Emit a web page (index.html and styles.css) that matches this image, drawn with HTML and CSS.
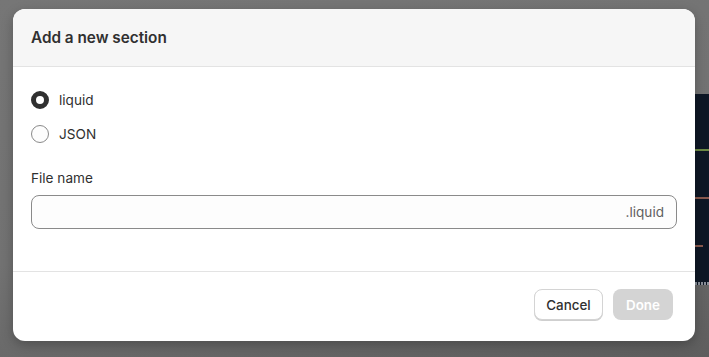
FILE: index.html
```html
<!DOCTYPE html>
<html lang="en">
<head>
  <meta charset="UTF-8" />
  <title>Add a new section</title>
  <link rel="stylesheet" href="styles.css">
</head>
<body>
  <!-- editor panel peeking out behind the overlay -->
  <div class="backdrop-panel">
    <span class="line line-green"></span>
    <span class="line line-red"></span>
    <span class="line line-red short"></span>
    <span class="dots"></span>
  </div>

  <div class="modal">
    <div class="modal-header">
      <h2>Add a new section</h2>
    </div>

    <div class="modal-body">
      <label class="radio-row">
        <span class="radio checked"></span>
        <span>liquid</span>
      </label>
      <label class="radio-row">
        <span class="radio"></span>
        <span>JSON</span>
      </label>

      <div class="field">
        <label class="field-label">File name</label>
        <div class="input-box">
          <input type="text" />
          <span class="suffix">.liquid</span>
        </div>
      </div>
    </div>

    <div class="modal-footer">
      <button class="btn btn-cancel">Cancel</button>
      <button class="btn btn-done" disabled>Done</button>
    </div>
  </div>
</body>
</html>
```

FILE: styles.css
```css
* {
  box-sizing: border-box;
  margin: 0;
  padding: 0;
  font-family: 'Inter', 'Liberation Sans', sans-serif;
}

html, body {
  height: 100%;
}

body {
  background: linear-gradient(170deg, #767676 0%, #727272 55%, #5e5e5e 100%);
  padding: 9px 14px 0 13px;
  overflow: hidden;
  position: relative;
}

.backdrop-panel {
  position: absolute;
  top: 94px;
  right: 0;
  width: 20px;
  height: 191px;
  background: #0e1725;
}

.line {
  position: absolute;
  left: 0;
  right: 0;
  height: 2px;
}

.line-green {
  top: 55px;
  background: #6d8a45;
}

.line-red {
  top: 103px;
  background: #8a5a4e;
}

.line-red.short {
  top: 151px;
  right: 6px;
}

.dots {
  position: absolute;
  bottom: 0;
  left: 0;
  right: 0;
  height: 3px;
  background: repeating-linear-gradient(90deg, #8a8f99 0 2px, #0e1725 2px 3px);
}

.modal {
  position: relative;
  width: 682px;
  background: #fff;
  border-radius: 12px;
  overflow: hidden;
  box-shadow: 0 4px 12px rgba(0, 0, 0, 0.25);
  color: #303030;
}

.modal-header {
  height: 58px;
  background: #f6f6f6;
  border-bottom: 1px solid #e3e3e3;
  display: flex;
  align-items: center;
  padding: 0 18px;
}

.modal-header h2 {
  font-size: 15.3px;
  font-weight: 600;
  color: #303030;
}

.modal-body {
  padding: 20px 18px 42px;
  display: flex;
  flex-direction: column;
  gap: 8px;
}

.radio-row {
  display: flex;
  align-items: center;
  gap: 10px;
  height: 26px;
  font-size: 13.6px;
}

.radio {
  width: 18px;
  height: 18px;
  border-radius: 50%;
  border: 1px solid #8a8a8a;
  background: #fdfdfd;
}

.radio.checked {
  border: 5px solid #303030;
  background: #fff;
}

.field {
  margin-top: 13px;
}

.field-label {
  display: block;
  font-size: 13.6px;
  line-height: 20px;
  margin-bottom: 7px;
}

.input-box {
  display: flex;
  align-items: center;
  height: 34px;
  border: 1px solid #8a8a8a;
  border-radius: 8px;
  background: #fdfdfd;
  padding: 0 12px;
}

.input-box input {
  flex: 1;
  border: none;
  outline: none;
  background: transparent;
  font-size: 13.6px;
}

.suffix {
  font-size: 13.6px;
  color: #616161;
}

.modal-footer {
  border-top: 1px solid #e3e3e3;
  display: flex;
  justify-content: flex-end;
  gap: 10px;
  padding: 17px 22px 21px;
}

.btn {
  height: 31px;
  border-radius: 8px;
  font-size: 13.4px;
  padding: 0 10px;
}

.btn-cancel {
  width: 69px;
  background: #fff;
  color: #303030;
  font-weight: 500;
  border: 1px solid #d4d4d4;
  box-shadow: 0 1px 0 #cfcfcf;
}

.btn-done {
  width: 60px;
  background: #d4d4d4;
  color: #fff;
  font-weight: 600;
  border: none;
}
```
